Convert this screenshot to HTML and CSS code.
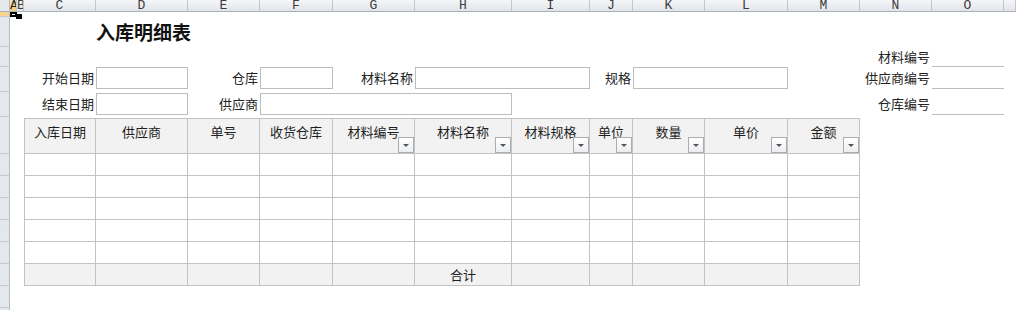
FILE: index.html
```html
<!DOCTYPE html>
<html lang="zh-CN">
<head>
    <meta charset="UTF-8">
    <meta name="viewport" content="width=device-width, initial-scale=1.0">
    <title>入库明细表</title>
    <link rel="stylesheet" href="styles.css">
</head>
<body>
    <div class="sheet">
        <div class="corner"></div>
        <div class="col-heads">
            <div class="col-head active">A</div>
            <div class="col-head">B</div>
            <div class="col-head">C</div>
            <div class="col-head">D</div>
            <div class="col-head">E</div>
            <div class="col-head">F</div>
            <div class="col-head">G</div>
            <div class="col-head">H</div>
            <div class="col-head">I</div>
            <div class="col-head">J</div>
            <div class="col-head">K</div>
            <div class="col-head">L</div>
            <div class="col-head">M</div>
            <div class="col-head">N</div>
            <div class="col-head">O</div>
            <div class="col-head"></div>
        </div>
        <div class="row-heads">
            <div class="row-head h5 active"><span>1</span></div>
            <div class="row-head h30"><span>2</span></div>
            <div class="row-head h20"><span>3</span></div>
            <div class="row-head h25"><span>4</span></div>
            <div class="row-head h25"><span>5</span></div>
            <div class="row-head h37"><span>6</span></div>
            <div class="row-head h22"><span>7</span></div>
            <div class="row-head h22"><span>8</span></div>
            <div class="row-head h22"><span>9</span></div>
            <div class="row-head h22"><span>10</span></div>
            <div class="row-head h22"><span>11</span></div>
            <div class="row-head h22"><span>12</span></div>
            <div class="row-head h22"><span>13</span></div>
            <div class="row-head h22"><span>14</span></div>
            <div class="row-head last"><span>15</span></div>
        </div>

        <div class="body">
            <!-- active cell A1 -->
            <svg class="cursor" width="12" height="8" viewBox="0 0 12 8">
                <rect x="1" y="1" width="5" height="3" fill="none" stroke="#000" stroke-width="2"/>
                <rect x="6" y="2" width="6" height="5" fill="#000"/>
            </svg>

            <div class="title">入库明细表</div>

            <div class="label c14 r3">材料编号</div>
            <div class="line-field c15 r3"></div>

            <div class="label c3 r4">开始日期</div>
            <div class="box c4 r4"></div>
            <div class="label c5 r4">仓库</div>
            <div class="box c6 r4"></div>
            <div class="label c7 r4">材料名称</div>
            <div class="box c8to10 r4"></div>
            <div class="label c10 r4">规格</div>
            <div class="box c11to13 r4"></div>
            <div class="label c14 r4">供应商编号</div>
            <div class="line-field c15 r4"></div>

            <div class="label c3 r6">结束日期</div>
            <div class="box c4 r6"></div>
            <div class="label c5 r6">供应商</div>
            <div class="box c6to9 r6"></div>
            <div class="label c14 r6">仓库编号</div>
            <div class="line-field c15 r6"></div>

            <div class="grid-table">
                <div class="cell th">入库日期</div>
                <div class="cell th">供应商</div>
                <div class="cell th">单号</div>
                <div class="cell th">收货仓库</div>
                <div class="cell th">材料编号<span class="filter"></span></div>
                <div class="cell th">材料名称<span class="filter"></span></div>
                <div class="cell th">材料规格<span class="filter"></span></div>
                <div class="cell th">单位<span class="filter"></span></div>
                <div class="cell th">数量<span class="filter"></span></div>
                <div class="cell th">单价<span class="filter"></span></div>
                <div class="cell th">金额<span class="filter"></span></div>

                <div class="cell"></div><div class="cell"></div><div class="cell"></div><div class="cell"></div><div class="cell"></div><div class="cell"></div><div class="cell"></div><div class="cell"></div><div class="cell"></div><div class="cell"></div><div class="cell"></div>
                <div class="cell"></div><div class="cell"></div><div class="cell"></div><div class="cell"></div><div class="cell"></div><div class="cell"></div><div class="cell"></div><div class="cell"></div><div class="cell"></div><div class="cell"></div><div class="cell"></div>
                <div class="cell"></div><div class="cell"></div><div class="cell"></div><div class="cell"></div><div class="cell"></div><div class="cell"></div><div class="cell"></div><div class="cell"></div><div class="cell"></div><div class="cell"></div><div class="cell"></div>
                <div class="cell"></div><div class="cell"></div><div class="cell"></div><div class="cell"></div><div class="cell"></div><div class="cell"></div><div class="cell"></div><div class="cell"></div><div class="cell"></div><div class="cell"></div><div class="cell"></div>
                <div class="cell"></div><div class="cell"></div><div class="cell"></div><div class="cell"></div><div class="cell"></div><div class="cell"></div><div class="cell"></div><div class="cell"></div><div class="cell"></div><div class="cell"></div><div class="cell"></div>

                <div class="cell tf"></div>
                <div class="cell tf"></div>
                <div class="cell tf"></div>
                <div class="cell tf"></div>
                <div class="cell tf"></div>
                <div class="cell tf">合计</div>
                <div class="cell tf"></div>
                <div class="cell tf"></div>
                <div class="cell tf"></div>
                <div class="cell tf"></div>
                <div class="cell tf"></div>
            </div>
        </div>
    </div>
</body>
</html>
```

FILE: styles.css
```css
:root {
    --cols: 7px 7px 72px 92px 72px 73px 82px 97px 78px 43px 72px 83px 72px 72px 72px 12px;
}
body, html {
    margin: 0;
    padding: 0;
    height: 100%;
    overflow: hidden;
    background-color: #fff;
    color: #1e1e1e;
    font-family: "Noto Sans CJK SC", "Noto Sans", sans-serif;
}
.sheet {
    display: grid;
    grid-template-columns: 10px 1fr;
    grid-template-rows: 12px 1fr;
    width: 1016px;
    height: 310px;
}
.corner {
    background-color: #e4e7eb;
    border-right: 1px solid #b6bbc2;
    border-bottom: 1px solid #a9b0b8;
    box-sizing: border-box;
}
.col-heads {
    display: grid;
    grid-template-columns: var(--cols);
    background: linear-gradient(#f5f6f8, #e1e4e9);
    border-bottom: 1px solid #a9b0b8;
    box-sizing: border-box;
}
.col-head {
    border-right: 1px solid #c2c7ce;
    box-sizing: border-box;
    overflow: hidden;
    white-space: nowrap;
    text-align: center;
    font-family: "Liberation Mono", monospace;
    font-size: 13px;
    line-height: 11px;
    color: #3c3c3c;
}
.col-head.active {
    background: linear-gradient(#fbe7b6, #f5cd78);
    color: #222;
}
.row-heads {
    display: flex;
    flex-direction: column;
    background-color: #e4e7eb;
    border-right: 1px solid #b6bbc2;
    box-sizing: border-box;
    overflow: hidden;
}
.row-head {
    flex: none;
    display: flex;
    justify-content: flex-end;
    align-items: center;
    border-bottom: 1px solid #c6cad0;
    box-sizing: border-box;
    overflow: hidden;
    font-family: "Liberation Sans", sans-serif;
    font-size: 11px;
    color: #333;
}
.row-head span {
    flex: none;
    width: 30px;
    text-align: center;
}
.row-head.active {
    background-color: #f7d68c;
}
.h5 { height: 5px; }
.h20 { height: 20px; }
.h22 { height: 22px; }
.h25 { height: 25px; }
.h30 { height: 30px; }
.h37 { height: 37px; }
.row-head.last {
    flex: 1;
}

.body {
    position: relative;
    display: grid;
    grid-template-columns: var(--cols);
    grid-template-rows: 5px 30px 20px 22px 4px 22px 3px 36px repeat(6, 22px) 1fr;
    font-size: 13px;
}
.cursor {
    position: absolute;
    left: 0;
    top: 0;
}
.title {
    grid-column: 4 / 7;
    grid-row: 2;
    font-size: 19px;
    font-weight: bold;
    line-height: 30px;
    color: #111;
    white-space: nowrap;
}
.label {
    align-self: center;
    padding-right: 2px;
    text-align: right;
    white-space: nowrap;
    line-height: 18px;
    color: #222;
}
.box {
    border: 1px solid #bdbdbd;
    box-sizing: border-box;
}
.line-field {
    border-bottom: 1px solid #bdbdbd;
}

.c3 { grid-column: 3; }
.c4 { grid-column: 4; }
.c5 { grid-column: 5; }
.c6 { grid-column: 6; }
.c7 { grid-column: 7; }
.c10 { grid-column: 10; }
.c14 { grid-column: 14; }
.c15 { grid-column: 15; }
.c6to9 { grid-column: 6 / 9; }
.c8to10 { grid-column: 8 / 10; }
.c11to13 { grid-column: 11 / 13; }
.r3 { grid-row: 3; }
.r4 { grid-row: 4; }
.r6 { grid-row: 6; }

.grid-table {
    grid-column: 3 / 14;
    grid-row: 8 / 15;
    display: grid;
    grid-template-columns: 71px 92px 72px 73px 82px 97px 78px 43px 72px 83px 72px;
    grid-template-rows: 35px repeat(6, 22px);
    border-top: 1px solid #c3c3c3;
    border-left: 1px solid #c3c3c3;
}
.cell {
    border-right: 1px solid #c3c3c3;
    border-bottom: 1px solid #c3c3c3;
    box-sizing: border-box;
}
.th {
    position: relative;
    padding-top: 5px;
    background-color: #f2f2f2;
    text-align: center;
    line-height: 15px;
    white-space: nowrap;
}
.tf {
    background-color: #f2f2f2;
    text-align: center;
    line-height: 21px;
}
.filter {
    position: absolute;
    right: 0;
    bottom: 0;
    width: 16px;
    height: 16px;
    box-sizing: border-box;
    border: 1px solid #adadad;
    background: linear-gradient(#fff, #eceef1);
}
.filter::after {
    content: "";
    position: absolute;
    left: 4px;
    top: 6px;
    border-left: 3px solid transparent;
    border-right: 3px solid transparent;
    border-top: 3px solid #555;
}
```
